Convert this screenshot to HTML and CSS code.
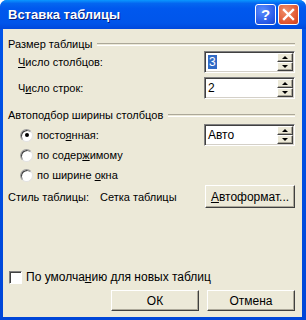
FILE: index.html
```html
<!DOCTYPE html>
<html lang="ru">
<head>
  <meta charset="UTF-8">
  <title>Вставка таблицы</title>
  <link rel="stylesheet" href="styles.css">
</head>
<body>
  <div class="window">
    <div class="titlebar">
      <span class="title">Вставка таблицы</span>
      <span class="tb-btn help">?</span>
      <span class="tb-btn close">
        <svg width="13" height="13" viewBox="0 0 13 13"><path d="M2 2 L11 11 M11 2 L2 11" stroke="#fff" stroke-width="2.4" stroke-linecap="square"/></svg>
      </span>
    </div>

    <div class="content">
      <div class="group g1">
        <span>Размер таблицы</span><i class="rule"></i>
      </div>
      <div class="row r1">
        <span class="label"><u>Ч</u>исло столбцов:</span>
        <div class="spin">
          <span class="field"><em class="sel">3</em></span>
          <span class="arrows"><b class="up"></b><b class="down"></b></span>
        </div>
      </div>
      <div class="row r2">
        <span class="label">Ч<u>и</u>сло строк:</span>
        <div class="spin">
          <span class="field">2</span>
          <span class="arrows"><b class="up"></b><b class="down"></b></span>
        </div>
      </div>

      <div class="group g2">
        <span>Автоподбор ширины столбцов</span><i class="rule"></i>
      </div>
      <div class="row radio-row rr1">
        <span class="radio on"></span>
        <span class="radio-text">посто<u>я</u>нная:</span>
        <div class="spin">
          <span class="field">Авто</span>
          <span class="arrows"><b class="up"></b><b class="down"></b></span>
        </div>
      </div>
      <div class="row radio-row">
        <span class="radio"></span>
        <span class="radio-text">по содер<u>ж</u>имому</span>
      </div>
      <div class="row radio-row">
        <span class="radio"></span>
        <span class="radio-text">по ширине <u>о</u>кна</span>
      </div>

      <div class="row style-row">
        <span class="style-label">Стиль таблицы:</span>
        <span class="style-name">Сетка таблицы</span>
        <span class="btn wide"><u>А</u>втоформат...</span>
      </div>

      <div class="row check-row">
        <span class="check"></span>
        <span>По умолча<u>н</u>ию для новых таблиц</span>
      </div>

      <div class="row buttons">
        <span class="btn">ОК</span>
        <span class="btn">Отмена</span>
      </div>
    </div>
  </div>
</body>
</html>
```

FILE: styles.css
```css
body {
  margin: 0;
  font-family: 'Liberation Sans', Arial, sans-serif;
  font-size: 11px;
  color: #000;
}
u {
  text-decoration: underline;
  text-underline-offset: 1px;
}
.window {
  width: 306px;
  height: 320px;
  display: flex;
  flex-direction: column;
  background: linear-gradient(#0055ea, #0046d8);
  border-radius: 7px 7px 0 0;
  overflow: hidden;
}
.titlebar {
  height: 29px;
  flex: none;
  display: flex;
  align-items: center;
  padding: 0 7px 0 8px;
  background: linear-gradient(#0a97ff 0%, #0466f0 12%, #0058ee 30%, #0055ea 80%, #0048dc 100%);
}
.title {
  flex: 1;
  color: #fff;
  font-weight: bold;
  font-size: 13px;
  text-shadow: 1px 1px #0a1e7a;
}
.tb-btn {
  width: 19px;
  height: 19px;
  margin-left: 2px;
  border: 1px solid #fff;
  border-radius: 3px;
  display: flex;
  align-items: center;
  justify-content: center;
  color: #fff;
  font-weight: bold;
  font-size: 15px;
}
.help {
  background: radial-gradient(circle at 35% 30%, #5c8eff, #2658e6 70%, #1d47c9);
}
.close {
  background: radial-gradient(circle at 35% 30%, #f0906a, #e0532e 70%, #c8401d);
}
.content {
  flex: 1;
  margin: 0 4px 3px 3px;
  background: #ece9d8;
  display: flex;
  flex-direction: column;
  padding: 0 7px 0 5px;
}
.group {
  height: 14px;
  display: flex;
  align-items: center;
  gap: 5px;
}
.g1 { margin-top: 8px; }
.g2 { margin-top: 10px; }
.rule {
  flex: 1;
  height: 1px;
  border-top: 1px solid #aca899;
  border-bottom: 1px solid #fff;
}
.row {
  display: flex;
  align-items: center;
}
.r1 { margin-top: 1px; height: 20px; }
.r2 { margin-top: 6px; height: 20px; }
.label {
  flex: 1;
  padding-left: 10px;
}
.spin {
  width: 87px;
  height: 18px;
  display: flex;
  background: #fff;
  border: 1px solid;
  border-color: #808080 #fff #fff #808080;
  box-shadow: inset 1px 1px #404040, inset -1px -1px #d4d0c8;
  padding: 1px;
  box-sizing: content-box;
}
.field {
  flex: 1;
  padding-left: 2px;
  display: flex;
  align-items: center;
  font-size: 12px;
}
.sel {
  font-style: normal;
  background: #316ac5;
  color: #fff;
  line-height: 14px;
  padding: 0 1px;
}
.arrows {
  width: 16px;
  display: flex;
  flex-direction: column;
}
.arrows b {
  flex: 1;
  background: #ece9d8;
  border: 1px solid;
  border-color: #fff #404040 #404040 #fff;
  box-shadow: inset -1px -1px #aca899;
  display: flex;
  align-items: center;
  justify-content: center;
}
.arrows b::after {
  content: "";
  border-left: 3px solid transparent;
  border-right: 3px solid transparent;
}
.up::after { border-bottom: 3px solid #000; }
.down::after { border-top: 3px solid #000; }

.radio-row { height: 20px; }
.rr1 { margin-top: 3px; }
.radio {
  width: 11px;
  height: 11px;
  margin-left: 12px;
  border-radius: 50%;
  background: #fff;
  border: 1px solid #9a9a9a;
  border-right-color: #e2e2e2;
  border-bottom-color: #e2e2e2;
  box-shadow: inset 1px 1px #404040;
  display: flex;
  align-items: center;
  justify-content: center;
}
.radio.on::after {
  content: "";
  width: 4px;
  height: 4px;
  border-radius: 50%;
  background: #000;
}
.radio-text {
  flex: 1;
  padding-left: 4px;
}
.style-row {
  height: 23px;
}
.style-label { width: 92px; }
.style-name { flex: 1; }
.btn {
  width: 86px;
  height: 19px;
  display: flex;
  align-items: center;
  justify-content: center;
  background: #ece9d8;
  border: 1px solid;
  border-color: #fff #404040 #404040 #fff;
  box-shadow: inset -1px -1px #aca899;
  font-size: 12px;
}
.btn.wide {
  width: 88px;
  height: 21px;
}
.check-row {
  margin-top: 62px;
  height: 14px;
  gap: 4px;
  font-size: 12px;
}
.check {
  width: 11px;
  height: 11px;
  margin-left: 1px;
  background: #fff;
  border: 1px solid;
  border-color: #808080 #fff #fff #808080;
  box-shadow: inset 1px 1px #404040;
}
.buttons {
  margin-top: 6px;
  justify-content: flex-end;
  gap: 8px;
}
```
